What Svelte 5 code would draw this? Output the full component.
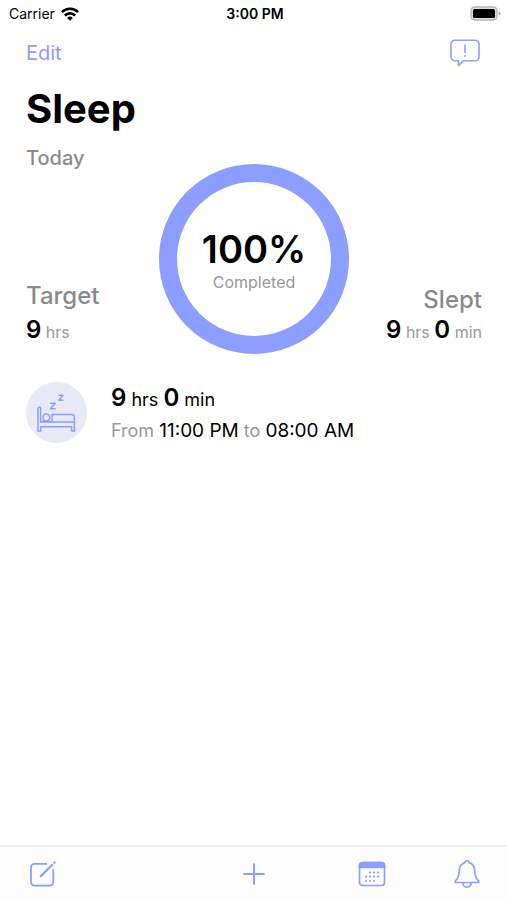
<script>
  const percent = 100;
  const radius = 86;
  const circumference = 2 * Math.PI * radius;
  const dash = (circumference * percent) / 100;
  const dots = [
    [12, 12.5], [16, 12.5], [20, 12.5],
    [8, 16.7], [12, 16.7], [16, 16.7], [20, 16.7],
    [8, 21], [12, 21], [16, 21]
  ];
</script>

<div class="screen">
  <div class="status">
    <div class="carrier">
      <span>Carrier</span>
      <svg width="18" height="14" viewBox="0 0 18 14" fill="none" stroke="#000" stroke-width="2.6" aria-hidden="true">
        <path d="M.9 5.1a11.6 11.6 0 0 1 16.2 0" />
        <path d="M3.8 8.5a7.4 7.4 0 0 1 10.4 0" />
        <path d="M9 13.8 6.2 10.9a4 4 0 0 1 5.6 0z" fill="#000" stroke="none" />
      </svg>
    </div>
    <strong>3:00 PM</strong>
    <svg class="battery" width="31" height="15" viewBox="0 0 31 15" aria-hidden="true">
      <rect x="1" y="1" width="26" height="13" rx="3.5" fill="#ddd" stroke="#b9b9b9" stroke-width="1.4" />
      <rect x="3" y="3" width="22" height="9" rx="1.5" />
      <path d="M28.6 5.2q2 .8 2 2.3t-2 2.3z" fill="#b5b5b5" />
    </svg>
  </div>

  <header>
    <nav>
      <button class="edit">Edit</button>
      <button aria-label="Feedback">
        <svg width="30" height="28" viewBox="0 0 30 28" fill="none" stroke="currentColor" stroke-width="1.6" stroke-linejoin="round">
          <path d="M5 1.2h20a4 4 0 0 1 4 4v12.6a4 4 0 0 1-4 4H13.500L8.500 26.600v-4.800H5a4 4 0 0 1-4-4V5.200a4 4 0 0 1 4-4z" />
          <path d="M15 5.500v8.500" />
          <path d="M15 16v2" />
        </svg>
      </button>
    </nav>
    <h1>Sleep</h1>
  </header>

  <main>
    <section class="summary">
      <div class="side">
        <h2 class="today">Today</h2>
        <div class="stat">
          <h3>Target</h3>
          <p><b>9</b> hrs</p>
        </div>
      </div>
      <div class="ring">
        <svg viewBox="0 0 190 190" aria-hidden="true">
          <circle cx="95" cy="95" r={radius} fill="none" stroke="#8c9eff" stroke-width="18" stroke-dasharray="{dash} {circumference}" />
        </svg>
        <div class="progress">
          <strong>{percent}%</strong>
          <span>Completed</span>
        </div>
      </div>
      <div class="side right">
        <div class="stat slept">
          <h3>Slept</h3>
          <p><b>9</b> hrs <b>0</b> min</p>
        </div>
      </div>
    </section>

    <section class="entry">
      <div class="badge">
        <svg width="40" height="42" viewBox="0 0 40 42" fill="none" stroke="#8c9eff" stroke-width="1.5" stroke-linejoin="round" aria-hidden="true">
          <path d="M1 39V16.500a1.300 1.300 0 0 1 2.600 0V30h33.800v9h-2.800v-4.200H3.800V39z" />
          <path d="M15 30V22.600h19.400a3 3 0 0 1 3 3V30" />
          <circle cx="9.300" cy="25.500" r="3.400" />
          <path d="M3.600 30q5-2 11.400 0" />
          <path d="M13 11.300h5.200l-5 5.400h5.400M21.500 3.300h4.500L21.700 8.200h4.700" />
        </svg>
      </div>
      <div class="detail">
        <p class="duration"><b>9</b> hrs <b>0</b> min</p>
        <p class="range">From <em>11:00 PM</em> to <em>08:00 AM</em></p>
      </div>
    </section>
  </main>

  <footer>
    <button aria-label="Compose">
      <svg width="30" height="28" viewBox="-2 0 30 28" fill="none" stroke="currentColor" stroke-width="1.800">
        <path d="M19 3.800H6.500a3.500 3.500 0 0 0-3.500 3.500v14.800a3.500 3.500 0 0 0 3.500 3.500h15.300a3.500 3.500 0 0 0 3.500-3.500V9" />
        <path d="M12.200 16.800 24.700 4.300" stroke-width="2.200" />
        <path d="M25.600 3.400 27.200 1.800" stroke-width="2.200" />
      </svg>
    </button>
    <button aria-label="Add">
      <svg width="22" height="22" viewBox="0 0 22 22" fill="none" stroke="currentColor" stroke-width="2">
        <path d="M11 .5v21M.5 11h21" />
      </svg>
    </button>
    <div class="tools">
      <button aria-label="Calendar">
        <svg width="28" height="28" viewBox="0 0 28 28" fill="none" stroke="currentColor" stroke-width="1.700">
          <rect x="1.500" y="2.500" width="25" height="23" rx="3" />
          <path d="M1.500 7.500v-2a3 3 0 0 1 3-3h19a3 3 0 0 1 3 3v2z" fill="currentColor" />
          {#each dots as [x, y]}
            <circle cx={x} cy={y} r="1.100" fill="currentColor" stroke="none" />
          {/each}
        </svg>
      </button>
      <button aria-label="Reminders">
        <svg width="28" height="30" viewBox="0 0 28 30" fill="none" stroke="currentColor" stroke-width="1.700" stroke-linejoin="round">
          <path d="M14 1.600q1.800 0 2.200 2c4 1.200 5.300 4.400 5.500 8.400.3 5.500 1 7.500 4 10v1.500H2.300V22c3-2.500 3.700-4.500 4-10 .2-4 1.500-7.200 5.500-8.400q.4-2 2.200-2z" />
          <path d="M9.800 24a4.200 4.200 0 0 0 8.400 0" />
        </svg>
      </button>
    </div>
  </footer>
</div>

<style>
  :global(body) {
    margin: 0;
    background: #fff;
  }
  .screen {
    display: flex;
    flex-direction: column;
    min-height: 100vh;
    font-family: Inter, "Liberation Sans", sans-serif;
    color: #000;
  }
  h1, h2, h3, p {
    margin: 0;
  }
  button {
    display: block;
    padding: 0;
    border: 0;
    background: none;
    font: inherit;
    color: #8c9eff;
    cursor: pointer;
  }
  svg {
    display: block;
  }
  .status {
    display: grid;
    grid-template-columns: 1fr auto 1fr;
    align-items: center;
    height: 27px;
    padding: 0 6px 0 9px;
    font-size: 14px;
  }
  .status strong {
    font-weight: 600;
  }
  .carrier {
    display: flex;
    align-items: center;
    gap: 6px;
  }
  .battery {
    justify-self: end;
  }
  header {
    padding: 0 27px 0 26px;
  }
  nav {
    display: flex;
    align-items: center;
    justify-content: space-between;
    height: 52px;
  }
  .edit {
    font-size: 20px;
  }
  h1 {
    font-size: 40px;
    line-height: 48px;
    font-weight: 700;
    margin-top: 6px;
  }
  main {
    flex: 1;
    padding: 13px 25px 0 26px;
  }
  .summary {
    display: grid;
    grid-template-columns: 1fr auto 1fr;
    align-items: stretch;
  }
  .side {
    display: flex;
    flex-direction: column;
    justify-content: space-between;
    padding-bottom: 7px;
  }
  .right {
    justify-content: flex-end;
    text-align: right;
  }
  .today {
    font-size: 20px;
    line-height: 24px;
    font-weight: 500;
    color: #8a8a8e;
  }
  h3 {
    font-size: 24px;
    line-height: 30px;
    font-weight: 500;
    color: #8a8a8e;
    margin-bottom: 4px;
  }
  .slept h3 {
    margin-bottom: 0;
  }
  .stat p {
    font-size: 16px;
    line-height: 30px;
    color: #98989c;
    white-space: nowrap;
  }
  b {
    font-size: 24px;
    font-weight: 600;
    color: #000;
  }
  .ring {
    display: grid;
    width: 190px;
    margin-top: 18px;
  }
  .ring > * {
    grid-area: 1 / 1;
  }
  .progress {
    display: flex;
    flex-direction: column;
    align-items: center;
    justify-content: center;
    padding-top: 2px;
  }
  .progress strong {
    font-size: 38px;
    line-height: 44px;
    font-weight: 600;
  }
  .progress span {
    font-size: 16px;
    line-height: 22px;
    color: #98989c;
  }
  .entry {
    display: flex;
    align-items: flex-start;
    gap: 24px;
    margin-top: 28px;
  }
  .badge {
    display: flex;
    align-items: center;
    justify-content: center;
    width: 61px;
    height: 61px;
    border-radius: 50%;
    background: #e8eaf8;
  }
  .duration {
    font-size: 18px;
    line-height: 32px;
  }
  .range {
    font-size: 18px;
    line-height: 30px;
    color: #98989c;
  }
  em {
    font-style: normal;
    font-size: 19px;
    color: #000;
  }
  footer {
    display: grid;
    grid-template-columns: 1fr auto 1fr;
    align-items: center;
    height: 53px;
    padding: 0 26px;
    border-top: 2px solid #eee;
    background: #fdfdfd;
  }
  .tools {
    display: flex;
    align-items: center;
    justify-content: flex-end;
    gap: 67px;
  }
</style>
